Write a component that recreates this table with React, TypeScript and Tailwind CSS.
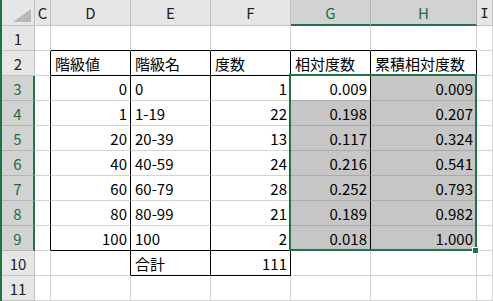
import React from "react";

type Align = "l" | "r";
type Cell = { t?: string; a?: Align };

const FONT = "font-['Noto_Sans_CJK_JP','Noto_Sans',sans-serif]";

// spreadsheet contents, rows 1..11, columns C..I
const rows: Cell[][] = [
  [{}, {}, {}, {}, {}, {}, {}],
  [
    {},
    { t: "階級値", a: "l" },
    { t: "階級名", a: "l" },
    { t: "度数", a: "l" },
    { t: "相対度数", a: "l" },
    { t: "累積相対度数", a: "l" },
    {},
  ],
  ...[
    ["0", "0", "1", "0.009", "0.009"],
    ["1", "1-19", "22", "0.198", "0.207"],
    ["20", "20-39", "13", "0.117", "0.324"],
    ["40", "40-59", "24", "0.216", "0.541"],
    ["60", "60-79", "28", "0.252", "0.793"],
    ["80", "80-99", "21", "0.189", "0.982"],
    ["100", "100", "2", "0.018", "1.000"],
  ].map(
    ([d, e, f, g, h]): Cell[] => [
      {},
      { t: d, a: "r" },
      { t: e, a: "l" },
      { t: f, a: "r" },
      { t: g, a: "r" },
      { t: h, a: "r" },
      {},
    ]
  ),
  [{}, {}, { t: "合計", a: "l" }, { t: "111", a: "r" }, {}, {}, {}],
  [{}, {}, {}, {}, {}, {}, {}],
];

const colLetters = ["C", "D", "E", "F", "G", "H", "I"];

// r: 1-based row number, c: 0=C .. 6=I
function rightBlack(r: number, c: number) {
  if (r >= 2 && r <= 9 && c >= 0 && c <= 5) return true;
  if (r === 10 && c >= 1 && c <= 3) return true;
  return false;
}
function bottomBlack(r: number, c: number) {
  if ((r === 1 || r === 2 || r === 9) && c >= 1 && c <= 5) return true;
  if (r === 10 && (c === 2 || c === 3)) return true;
  return false;
}
function inSel(r: number, c: number) {
  return r >= 3 && r <= 9 && (c === 4 || c === 5);
}

function DataCell({ r, c, cell }: { r: number; c: number; cell: Cell }) {
  const filled = inSel(r, c) && !(r === 3 && c === 4);
  const rb = rightBlack(r, c) ? "border-r-black" : "border-r-[#d4d4d4]";
  const bb = bottomBlack(r, c)
    ? "border-b-black"
    : inSel(r, c)
    ? "border-b-[#a9a9a9]"
    : "border-b-[#d4d4d4]";
  const bg = filled ? "bg-[#c6c6c6]" : "bg-white";
  const align = cell.a === "r" ? "justify-end pr-[3px]" : "justify-start pl-[4px]";
  return (
    <div
      className={`flex items-center overflow-hidden whitespace-nowrap border-r border-b text-[15px] leading-none text-black ${rb} ${bb} ${bg} ${align}`}
    >
      {cell.t ?? ""}
    </div>
  );
}

function Corner() {
  return (
    <div className="relative border-r border-b border-r-[#c3c3c3] border-b-[#c3c3c3] bg-[#e6e6e6]">
      <svg className="absolute right-[3px] bottom-[3px]" width="18" height="13" viewBox="0 0 18 13">
        <polygon points="18,0 18,13 0,13" fill="#b8b8b8" />
      </svg>
    </div>
  );
}

function ColHeader({ c }: { c: number }) {
  const sel = c === 4 || c === 5;
  if (sel) {
    return (
      <div className="flex items-center justify-center border-r border-r-[#b4b4b4] border-b-2 border-b-[#217346] bg-[#d2d2d2] text-[15px] leading-none text-[#1f6b43]">
        {colLetters[c]}
      </div>
    );
  }
  if (c === 6) {
    return (
      <div className="flex items-center justify-center border-r border-b border-r-[#c3c3c3] border-b-[#c3c3c3] bg-[#e6e6e6] font-['DejaVu_Sans_Mono',monospace] text-[14px] leading-none text-[#222]">
        {colLetters[c]}
      </div>
    );
  }
  return (
    <div className="flex items-center justify-center border-r border-b border-r-[#c3c3c3] border-b-[#c3c3c3] bg-[#e6e6e6] text-[15px] leading-none text-[#222]">
      {colLetters[c]}
    </div>
  );
}

function RowHeader({ r }: { r: number }) {
  const sel = r >= 3 && r <= 9;
  if (sel) {
    return (
      <div className="flex items-center justify-center border-r-2 border-r-[#217346] border-b border-b-[#b4b4b4] bg-[#d2d2d2] text-[15px] leading-none text-[#1f6b43]">
        {r}
      </div>
    );
  }
  return (
    <div className="flex items-center justify-center border-r border-b border-r-[#c3c3c3] border-b-[#c3c3c3] bg-[#e6e6e6] text-[15px] leading-none text-[#222]">
      {r}
    </div>
  );
}

export default function App() {
  return (
    <div className={`flex h-[301px] w-[493px] overflow-hidden bg-white ${FONT}`}>
      <div className="w-[2px] shrink-0 bg-[#217346]" />
      <div className="relative flex-1">
        <div className="grid h-full grid-cols-[33px_16px_80px_80px_80px_80px_106px_1fr] grid-rows-[26px_repeat(11,25px)]">
          <Corner />
          {colLetters.map((_, c) => (
            <ColHeader key={c} c={c} />
          ))}
          {rows.map((row, i) => (
            <React.Fragment key={i}>
              <RowHeader r={i + 1} />
              {row.map((cell, c) => (
                <DataCell key={c} r={i + 1} c={c} cell={cell} />
              ))}
            </React.Fragment>
          ))}
        </div>
        {/* selection outline G3:H9 with fill handle */}
        <div className="pointer-events-none absolute left-[287px] top-[74px] h-[177px] w-[188px] border-2 border-[#217346]" />
        <div className="pointer-events-none absolute left-[470px] top-[247px] h-[7px] w-[7px] border border-white bg-[#217346]" />
      </div>
    </div>
  );
}
